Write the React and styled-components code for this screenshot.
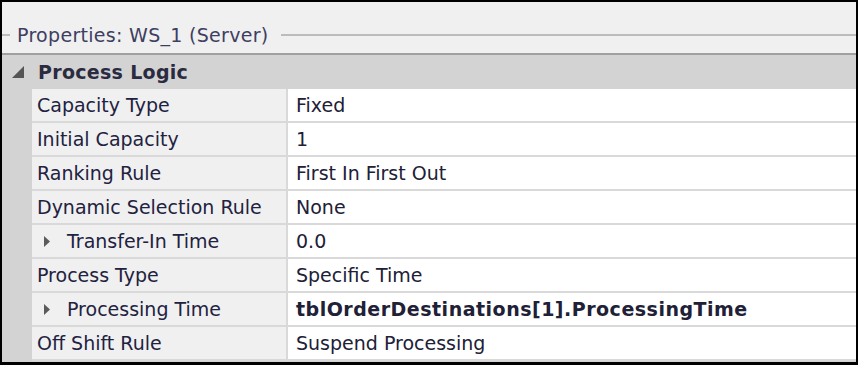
import React from 'react';
import styled, { createGlobalStyle, css } from 'styled-components';

const GlobalStyle = createGlobalStyle`
  html, body {
    margin: 0;
    padding: 0;
    background: #000;
  }
`;

const Frame = styled.div`
  width: 858px;
  height: 365px;
  box-sizing: border-box;
  border: 2px solid #000;
  border-bottom-width: 3px;
  background: #f0f0f0;
  display: flex;
  flex-direction: column;
  font-family: "DejaVu Sans", Verdana, sans-serif;
  font-size: 19px;
  overflow: hidden;
`;

const Header = styled.div`
  height: 53px;
  flex-shrink: 0;
  box-sizing: border-box;
  padding-top: 16px;
  background: #f0f0f0;
  border-bottom: 2px solid #a0a0a0;
`;

const TitleRow = styled.div`
  height: 33px;
  display: flex;
  align-items: center;
  gap: 7px;
`;

const Rule = styled.div`
  height: 2px;
  background: #bcbcbc;
  ${props => props.grow ? css`flex: 1;` : css`width: 8px;`}
`;

const Title = styled.span`
  color: #3e3e62;
  white-space: nowrap;
  letter-spacing: 0.3px;
  padding-right: 5px;
`;

const Category = styled.div`
  height: 34px;
  flex-shrink: 0;
  background: #d3d3d3;
  display: flex;
  align-items: center;
  gap: 13px;
  padding-left: 10px;
  font-weight: bold;
  letter-spacing: 0.3px;
  color: #2a2a40;
`;

const Grid = styled.div`
  flex: 1;
  display: grid;
  grid-template-columns: 30px 254px 1fr;
  grid-auto-rows: 34px;
  background: #d3d3d3;
`;

const Cell = styled.div`
  box-sizing: border-box;
  border-bottom: 2px solid #d9d9d9;
  display: flex;
  align-items: center;
  white-space: nowrap;
  overflow: hidden;
`;

const Gutter = styled.div``;

const Label = styled(Cell)`
  background: #f0f0f0;
  color: #222240;
  padding-left: ${props => props.nested ? '12px' : '5px'};
  gap: 16px;
`;

const Value = styled(Cell)`
  background: #fff;
  border-left: 2px solid #d9d9d9;
  padding-left: 8px;
  color: #202036;
  font-weight: ${props => props.bold ? 'bold' : 'normal'};
  letter-spacing: ${props => props.bold ? '0.5px' : '0'};
`;

const Expanded = () => (
  <svg width="13" height="13" viewBox="0 0 13 13">
    <polygon points="12,0 12,12 0,12" fill="#555" />
  </svg>
);

const Collapsed = () => (
  <svg width="7" height="11" viewBox="0 0 7 11">
    <polygon points="0,0 6,5.5 0,11" fill="#5a5a5a" />
  </svg>
);

const rows = [
  { label: 'Capacity Type', value: 'Fixed' },
  { label: 'Initial Capacity', value: '1' },
  { label: 'Ranking Rule', value: 'First In First Out' },
  { label: 'Dynamic Selection Rule', value: 'None' },
  { label: 'Transfer-In Time', value: '0.0', nested: true },
  { label: 'Process Type', value: 'Specific Time' },
  { label: 'Processing Time', value: 'tblOrderDestinations[1].ProcessingTime', nested: true, bold: true },
  { label: 'Off Shift Rule', value: 'Suspend Processing' },
];

export default function App() {
  return (
    <>
      <GlobalStyle />
      <Frame>
        <Header>
          <TitleRow>
            <Rule />
            <Title>Properties: WS_1 (Server)</Title>
            <Rule grow />
          </TitleRow>
        </Header>
        <Category>
          <Expanded />
          <span>Process Logic</span>
        </Category>
        <Grid>
          {rows.map(r => (
            <React.Fragment key={r.label}>
              <Gutter />
              <Label nested={r.nested}>
                {r.nested && <Collapsed />}
                <span>{r.label}</span>
              </Label>
              <Value bold={r.bold}>{r.value}</Value>
            </React.Fragment>
          ))}
        </Grid>
      </Frame>
    </>
  );
}
